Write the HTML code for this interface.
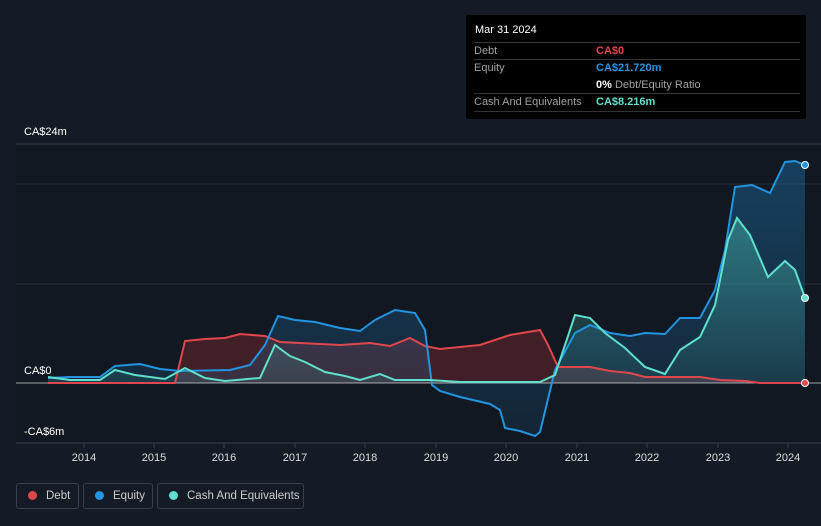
<!DOCTYPE html>
<html><head><style>
body{margin:0;width:821px;height:526px;background:#151b26;font-family:"Liberation Sans",sans-serif;overflow:hidden;position:relative}
.t{position:absolute;font-size:11px;color:#fff}
.tip{position:absolute;left:466px;top:15px;width:340px;height:104px;background:#000;border-radius:2px}
.row{position:absolute;left:8px;width:326px;border-top:1px solid #333;font-size:11px;color:#a0a0a0}
.leg{position:absolute;top:483px;height:26px;border:1px solid #3a404a;border-radius:3px;font-size:11.5px;color:#ccc;line-height:24px;box-sizing:border-box;white-space:nowrap}
.leg i{display:inline-block;width:9px;height:9px;border-radius:50%;margin:0 9px 0 11px;vertical-align:-1px}
</style></head><body>
<svg width="821" height="526" style="position:absolute;left:0;top:0">
<defs>
<linearGradient id="eg" x1="0" y1="0" x2="0" y2="1"><stop offset="0" stop-color="#1e6fa8" stop-opacity=".45"/><stop offset="1" stop-color="#1e6fa8" stop-opacity=".15"/></linearGradient>
<linearGradient id="cg" x1="0" y1="0" x2="0" y2="1"><stop offset="0" stop-color="#4fd1c0" stop-opacity=".4"/><stop offset="1" stop-color="#4fd1c0" stop-opacity=".1"/></linearGradient>
</defs>
<rect x="16" y="144" width="805" height="299" fill="#121821"/>
<line x1="16" y1="144" x2="821" y2="144" stroke="#3a404a"/>
<line x1="16" y1="184" x2="821" y2="184" stroke="#2a303a"/>
<line x1="16" y1="284" x2="821" y2="284" stroke="#2a303a"/>
<line x1="16" y1="443" x2="821" y2="443" stroke="#3a404a"/>
<path d="M48,383 L175,383 L185,341 L205,339 L225,338 L240,334 L265,336 L280,342 L300,343 L340,345 L370,343 L390,346 L410,338 L425,346 L440,349 L480,345 L510,335 L540,330 L548,345 L558,367 L590,367 L610,371 L630,373 L645,377 L700,377 L720,380 L745,381 L760,383 L805,383 L805,383 L48,383Z" fill="#8a2a30" fill-opacity=".4"/>
<path d="M48,378 L70,377 L100,377 L115,366 L140,364 L160,369 L180,371 L230,370 L250,365 L265,345 L278,316 L295,320 L315,322 L340,328 L360,331 L375,320 L395,310 L415,313 L425,330 L432,385 L440,391 L460,397 L490,404 L500,410 L505,428 L520,431 L535,436 L540,432 L555,370 L575,333 L590,325 L610,333 L630,336 L645,333 L665,334 L680,318 L700,318 L715,290 L725,250 L735,187 L752,185 L770,193 L785,162 L795,161 L805,165 L805,383 L48,383Z" fill="url(#eg)"/>
<path d="M48,377 L70,380 L100,380 L115,370 L135,375 L165,379 L185,368 L205,378 L225,381 L260,378 L275,345 L290,356 L305,362 L325,372 L345,376 L360,380 L380,374 L395,380 L430,380 L460,382 L540,382 L555,375 L575,315 L590,318 L605,333 L625,348 L645,367 L665,374 L680,350 L700,337 L715,305 L728,240 L737,218 L750,235 L768,277 L785,261 L795,270 L805,298 L805,383 L48,383Z" fill="url(#cg)"/>
<line x1="16" y1="383" x2="821" y2="383" stroke="#fff" stroke-opacity=".6"/>
<path d="M48,383 L175,383 L185,341 L205,339 L225,338 L240,334 L265,336 L280,342 L300,343 L340,345 L370,343 L390,346 L410,338 L425,346 L440,349 L480,345 L510,335 L540,330 L548,345 L558,367 L590,367 L610,371 L630,373 L645,377 L700,377 L720,380 L745,381 L760,383 L805,383" fill="none" stroke="#e0474c" stroke-width="2"/>
<path d="M48,378 L70,377 L100,377 L115,366 L140,364 L160,369 L180,371 L230,370 L250,365 L265,345 L278,316 L295,320 L315,322 L340,328 L360,331 L375,320 L395,310 L415,313 L425,330 L432,385 L440,391 L460,397 L490,404 L500,410 L505,428 L520,431 L535,436 L540,432 L555,370 L575,333 L590,325 L610,333 L630,336 L645,333 L665,334 L680,318 L700,318 L715,290 L725,250 L735,187 L752,185 L770,193 L785,162 L795,161 L805,165" fill="none" stroke="#2394df" stroke-width="2"/>
<path d="M48,377 L70,380 L100,380 L115,370 L135,375 L165,379 L185,368 L205,378 L225,381 L260,378 L275,345 L290,356 L305,362 L325,372 L345,376 L360,380 L380,374 L395,380 L430,380 L460,382 L540,382 L555,375 L575,315 L590,318 L605,333 L625,348 L645,367 L665,374 L680,350 L700,337 L715,305 L728,240 L737,218 L750,235 L768,277 L785,261 L795,270 L805,298" fill="none" stroke="#5ee0cc" stroke-width="2"/>
<circle cx="805" cy="165" r="3.5" fill="#2394df" stroke="#fff"/>
<circle cx="805" cy="298" r="3.5" fill="#5ee0cc" stroke="#fff"/>
<circle cx="805" cy="383" r="3.5" fill="#e0474c" stroke="#fff"/>
<g stroke="#3a404a"><line x1="84" y1="443" x2="84" y2="448"/><line x1="154" y1="443" x2="154" y2="448"/><line x1="224" y1="443" x2="224" y2="448"/><line x1="295" y1="443" x2="295" y2="448"/><line x1="365" y1="443" x2="365" y2="448"/><line x1="436" y1="443" x2="436" y2="448"/><line x1="506" y1="443" x2="506" y2="448"/><line x1="577" y1="443" x2="577" y2="448"/><line x1="647" y1="443" x2="647" y2="448"/><line x1="718" y1="443" x2="718" y2="448"/><line x1="788" y1="443" x2="788" y2="448"/></g>
<g fill="#ddd" font-size="11" text-anchor="middle" font-family="Liberation Sans"><text x="84" y="461">2014</text><text x="154" y="461">2015</text><text x="224" y="461">2016</text><text x="295" y="461">2017</text><text x="365" y="461">2018</text><text x="436" y="461">2019</text><text x="506" y="461">2020</text><text x="577" y="461">2021</text><text x="647" y="461">2022</text><text x="718" y="461">2023</text><text x="788" y="461">2024</text></g>
</svg>
<div class="t" style="left:24px;top:126px">CA$24m</div>
<div class="t" style="left:24px;top:365px">CA$0</div>
<div class="t" style="left:24px;top:426px">-CA$6m</div>
<div class="tip">
<div style="position:absolute;left:9px;top:9px;font-size:11px;color:#fff">Mar 31 2024</div>
<div class="row" style="top:27px;height:17px;line-height:17px">Debt<span style="position:absolute;left:122px;color:#e0474c;font-weight:bold">CA$0</span></div>
<div class="row" style="top:44px;height:34px;line-height:17px">Equity<span style="position:absolute;left:122px;color:#2394df;font-weight:bold">CA$21.720m</span><br><span style="position:absolute;left:122px;top:17px"><b style="color:#fff">0%</b> Debt/Equity Ratio</span></div>
<div class="row" style="top:78px;height:17px;line-height:17px;border-bottom:1px solid #333">Cash And Equivalents<span style="position:absolute;left:122px;color:#5ee0cc;font-weight:bold">CA$8.216m</span></div>
</div>
<div class="leg" style="left:16px;width:63px"><i style="background:#e0474c"></i>Debt</div>
<div class="leg" style="left:83px;width:70px"><i style="background:#2394df"></i>Equity</div>
<div class="leg" style="left:157px;width:147px"><i style="background:#5ee0cc"></i>Cash And Equivalents</div>
</body></html>
